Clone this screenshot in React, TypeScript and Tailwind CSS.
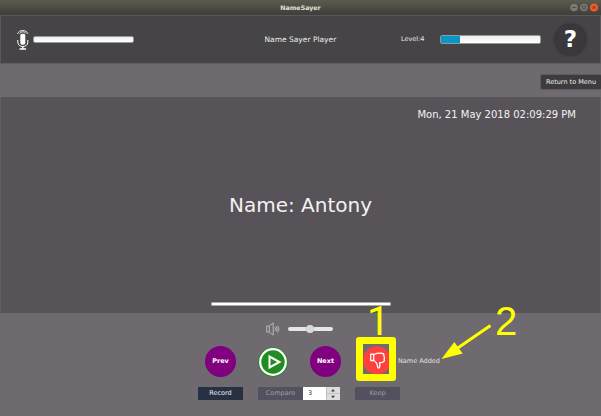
import React from "react";

function Mic() {
  return (
    <svg width="12" height="22" viewBox="0 0 12 22" fill="none" stroke="#fff" className="shrink-0">
      <rect x="3.3" y="4.8" width="5" height="11" rx="1.8" fill="#fff" stroke="none" />
      <path d="M.6 4.8C2 .4 9.4.4 11 4.8M2.6 4.6C4 2.2 7.6 2.2 9 4.6" strokeWidth="0.9" />
      <path d="M.8 11v2.2c0 5.8 10 5.8 10 0V11" strokeWidth="1" />
      <path d="M5.8 17.5v2M2.5 20h6.6" strokeWidth="1.4" />
    </svg>
  );
}

function Speaker() {
  return (
    <svg width="14" height="14" viewBox="0 0 14 14" fill="none" stroke="#c9c6cb" strokeWidth="0.8" className="shrink-0">
      <path d="M.7 4h2.6v6H.7zM3.3 4 7.2.9v12.2L3.3 10" />
      <path d="M8.9 5.4q1.3 1.6 0 3.2M10.2 4.5q2 2.5 0 5M11.6 3.6q2.7 3.4 0 6.8" />
    </svg>
  );
}

function TitleBar() {
  return (
    <div className="grid h-[15px] shrink-0 grid-cols-[1fr_auto_1fr] items-center bg-linear-to-b from-[#5c5a50] to-[#3f3e38]">
      <span />
      <span className="text-[6.3px] leading-[15px] font-bold text-[#e4e0d8]">NameSayer</span>
      <svg width="31" height="10" viewBox="0 0 31 10" className="justify-self-end">
        <circle cx="4" cy="4.5" r="3.8" fill="#7b7a73" />
        <circle cx="14" cy="4.5" r="3.8" fill="#7b7a73" />
        <circle cx="24" cy="4.5" r="4" fill="#ee5a2b" />
        <path d="M2.2 4.5h3.6M12.5 3h3v3h-3z" fill="none" stroke="#45443e" strokeWidth="0.8" />
        <path d="m22.6 3.1 2.8 2.8m0-2.8-2.8 2.8" stroke="#5a281a" strokeWidth="0.8" />
      </svg>
    </div>
  );
}

function Header() {
  return (
    <header className="flex h-[48px] shrink-0 items-center border-t border-r border-l border-[#5b585d] bg-[#464446] text-[#eeecee]">
      <div className="flex w-[263px] items-center pl-[15.5px]">
        <Mic />
        <div className="ml-[4.5px] h-[7px] w-[101px] rounded-[2px] border border-[#98979a] bg-linear-to-b from-[#eee] to-white" />
      </div>
      <span className="mt-px w-[137px] pl-[0.5px] text-[7.5px]">Name Sayer Player</span>
      <span className="mt-px w-[39px] text-[6.5px]">Level:4</span>
      <div className="h-[9px] w-[101px] rounded-[2px] border border-[#98979a] bg-linear-to-b from-[#eee] to-white">
        <div className="h-full w-[19px] bg-[#0796c8]" />
      </div>
      <button className="ml-[14px] flex size-[31px] items-center justify-center rounded-full bg-[#3a383b] text-[23px] leading-none font-bold text-white shadow-[0_0_3px_#29272a]">
        ?
      </button>
    </header>
  );
}

function Action({ label, active }: { label: string; active?: boolean }) {
  return (
    <button
      className={
        active
          ? "h-[13px] w-[45px] bg-[#283044] text-[6.5px] leading-[13px] text-[#eeecee]"
          : "h-[13px] w-[45px] bg-[#53515f] text-[6.5px] leading-[13px] text-[#a09da5]"
      }
    >
      {label}
    </button>
  );
}

function Round({ label }: { label: string }) {
  return (
    <button className="size-[31px] rounded-full bg-[#800080] text-[6.5px] leading-[31px] font-bold text-white">
      {label}
    </button>
  );
}

function Controls() {
  return (
    <footer className="flex h-[103px] shrink-0 flex-col">
      <div className="flex h-[31px] items-center pl-[266px]">
        <Speaker />
        <div className="ml-[7.5px] flex h-[4px] w-[45px] items-center justify-center rounded-[2px] bg-[#e6e8e6]">
          <div className="size-[8px] shrink-0 rounded-full bg-[#d9dbda] shadow-[0_0_1px_#777]" />
        </div>
      </div>
      <div className="flex h-[35px] items-center pl-[205px]">
        <Round label="Prev" />
        <svg width="30" height="30" viewBox="0 0 30 30" className="ml-[22px]">
          <circle cx="15" cy="15" r="14.8" fill="#228b22" />
          <circle cx="15" cy="15" r="12.8" fill="none" stroke="#fff" strokeWidth="2.2" />
          <path d="M11.5 9.5v11l10-5.5z" fill="none" stroke="#fff" strokeWidth="2" />
        </svg>
        <div className="ml-[22px] flex">
          <Round label="Next" />
        </div>
        <div className="-mt-[5px] ml-[15px] flex h-[44px] w-[40px] shrink-0 items-center justify-center rounded-[3px] border-[7px] border-[#ffff00]">
          <svg width="26" height="30" viewBox="0 0 26 30" className="shrink-0">
            <circle cx="14" cy="16.3" r="14" fill="#ff4040" />
            <path
              d="M7.7 10.2h3v6.3h-3zM10.7 10.5c3-1.2 6.7-1.5 8.8-1 1.6.4 1.6 2 1.4 2.8.8 1 .8 2 .2 2.8.5 1 .1 2.3-.9 2.9-1 .7-2.5.5-3.6.6.5 2 .4 5.6-1.1 5.5-1.3 0-.7-3.2-2-4.9-.9-1.2-1.3-2-2.8-2.7"
              fill="none"
              stroke="#fff"
              strokeWidth="1.3"
              strokeLinejoin="round"
            />
          </svg>
        </div>
        <span className="mt-px ml-[2px] text-[6.5px] text-[#e2e0e4]">Name Added</span>
      </div>
      <div className="flex h-[29px] items-center pl-[198px]">
        <Action label="Record" active />
        <div className="ml-[15px] flex">
          <Action label="Compare" />
          <div className="flex h-[13px] w-[37px] bg-white">
            <span className="w-[23px] pl-[5px] text-[6.5px] leading-[13px] text-[#333]">3</span>
            <svg width="14" height="13" viewBox="0 0 14 13">
              <path d="M0 0h14v13H0z" fill="#dededf" />
              <path d="M0 6.5h14M.5 0v13" stroke="#b5b4b7" strokeWidth="0.7" />
              <path d="M5 4.4h4L7 2zM5 8.8h4l-2 2.4z" fill="#444" />
            </svg>
          </div>
        </div>
        <div className="ml-[15px] flex">
          <Action label="Keep" />
        </div>
      </div>
    </footer>
  );
}

export default function App() {
  return (
    <div className="relative flex h-[416px] w-[601px] flex-col overflow-hidden bg-[#6e6a70] font-['DejaVu_Sans',sans-serif] whitespace-nowrap">
      <TitleBar />
      <Header />
      <div className="flex h-[34px] shrink-0 items-center justify-end border-t border-[#615d63]">
        <button className="mt-[2px] h-[14px] w-[60px] rounded-[1px] bg-[#3d3b3e] text-center text-[6.5px] leading-[14px] text-[#f0eef0] shadow-[0_0_2px_#39373a]">
          Return to Menu
        </button>
      </div>
      <main className="flex h-[216px] shrink-0 flex-col border-r border-l border-[#625e64] bg-[#585358] text-[#f4f2f4]">
        <p className="mt-[11px] mr-[24px] text-right text-[10px] leading-[14px]">Mon, 21 May 2018 02:09:29 PM</p>
        <p className="mt-[71px] text-center text-[20px] leading-[24px]">Name: Antony</p>
        <div className="mt-[85px] ml-[209.5px] h-[4px] w-[180px] rounded-[1px] border border-[#aaa7ab] bg-white" />
      </main>
      <Controls />
      <span className="absolute top-[300px] left-[367px] font-['Roboto',sans-serif] text-[40px] leading-[44px] text-[#ffff00]">1</span>
      <span className="absolute top-[299px] left-[495px] font-['Liberation_Sans',sans-serif] text-[40px] leading-[44px] text-[#ffff00]">2</span>
      <svg className="absolute top-[320px] left-[440px]" width="54" height="42" viewBox="0 0 54 42">
        <path d="M50.5 5.5 17 28.5" stroke="#ff0" strokeWidth="3" />
        <path d="M1.5 39 14.3 22 22.7 33.5z" fill="#ff0" />
      </svg>
    </div>
  );
}
